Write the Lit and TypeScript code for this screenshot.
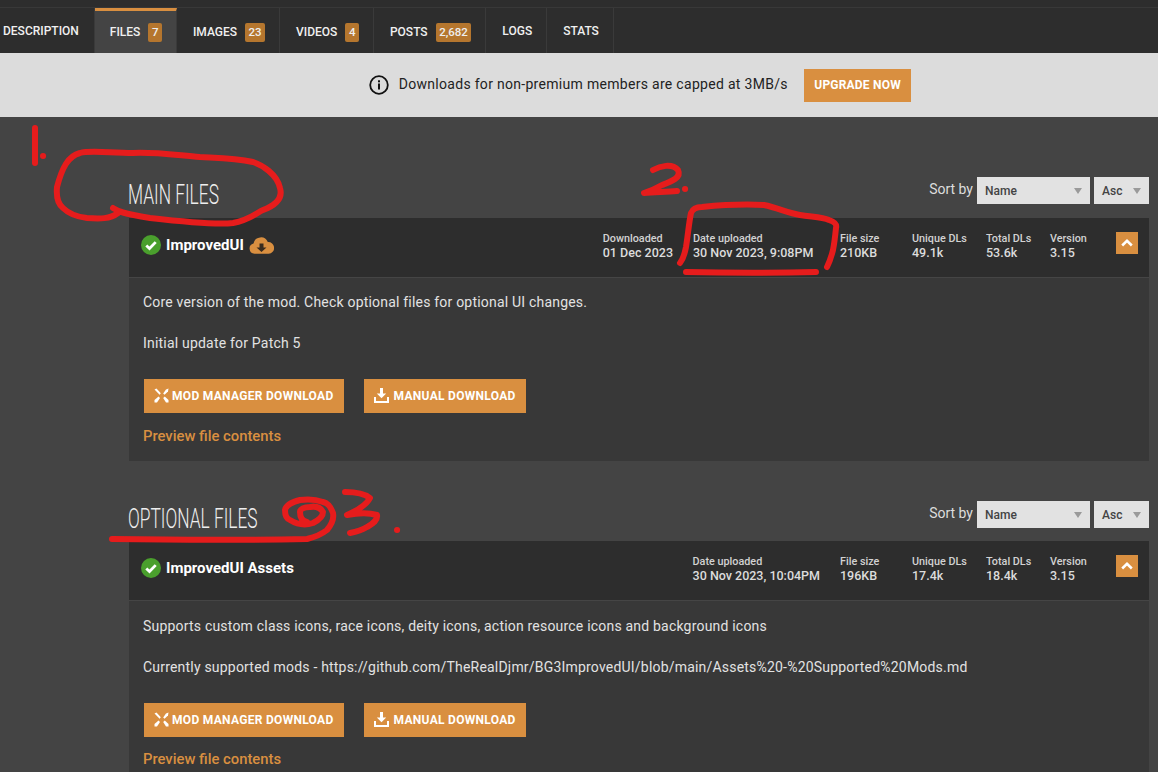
import { LitElement, html, css, svg } from 'lit';
import { customElement } from 'lit/decorators.js';

const tabs = [
  { label: 'Description' },
  { label: 'Files', count: '7', active: true },
  { label: 'Images', count: '23' },
  { label: 'Videos', count: '4' },
  { label: 'Posts', count: '2,682' },
  { label: 'Logs' },
  { label: 'Stats' },
];

const sections = [
  {
    title: 'Main files',
    name: 'ImprovedUI',
    cloud: true,
    downloaded: '01 Dec 2023',
    uploaded: '30 Nov 2023, 9:08PM',
    size: '210KB',
    unique: '49.1k',
    total: '53.6k',
    version: '3.15',
    lines: [
      'Core version of the mod. Check optional files for optional UI changes.',
      'Initial update for Patch 5',
    ],
  },
  {
    title: 'Optional files',
    name: 'ImprovedUI Assets',
    cloud: false,
    downloaded: '',
    uploaded: '30 Nov 2023, 10:04PM',
    size: '196KB',
    unique: '17.4k',
    total: '18.4k',
    version: '3.15',
    lines: [
      'Supports custom class icons, race icons, deity icons, action resource icons and background icons',
      'Currently supported mods - https://github.com/TheRealDjmr/BG3ImprovedUI/blob/main/Assets%20-%20Supported%20Mods.md',
    ],
  },
];

const checkIcon = html`<svg class="check" viewBox="0 0 20 20" width="20" height="20">
  <circle cx="10" cy="10" r="10" fill="#4a9f2d"></circle>
  <path d="M5.3 10.4l3.2 3.1 6.2-6.4" fill="none" stroke="#fff" stroke-width="2.8"></path>
</svg>`;

const cloudIcon = html`<svg class="cloud" viewBox="0 0 25 17" width="25" height="17">
  <path d="M5.500 16.800a5.300 5.300 0 0 1-1-10.400A7.500 7.500 0 0 1 18.800 5a5.900 5.900 0 0 1 .8 11.800z" fill="#d98f40"></path>
  <path d="M10.500 6.500h4v4h3l-5 4.600-5-4.600h3z" fill="#3a2c1e"></path>
</svg>`;

const modIcon = html`<svg viewBox="0 0 15 15" width="15" height="15" fill="#fff">
  <path d="M.5 1.500L2.500.5L6.800 5.300L5.600 6.800z"></path>
  <path d="M14.500.5L14 3.500L10.500 6.800L9.200 5.400L12 1.500z"></path>
  <path d="M.5 12L4.500 8.400L6 9.900L3 14.500H.5z"></path>
  <path d="M9.200 9.900L10.800 8.400L14.500 12V14.500H12z"></path>
</svg>`;

const trayIcon = html`<svg viewBox="0 0 15 15" width="15" height="15" fill="#fff">
  <path d="M6 0h3v5.500h3.200L7.500 10.300 2.800 5.500H6z"></path>
  <path d="M0 9h2v4h11V9h2v6H0z"></path>
</svg>`;

const chevronIcon = html`<svg viewBox="0 0 12 8" width="12" height="8">
  <path d="M1.200 6.500L6 1.900l4.800 4.600" fill="none" stroke="#fff" stroke-width="2.600"></path>
</svg>`;

const infoIcon = html`<svg viewBox="0 0 20 20" width="20" height="20">
  <circle cx="10" cy="10" r="8.800" fill="none" stroke="#111" stroke-width="1.800"></circle>
  <rect x="9" y="8.500" width="2" height="6" fill="#111"></rect>
  <rect x="9" y="5.300" width="2" height="2" fill="#111"></rect>
</svg>`;

// hand drawn marks from the person who took the screenshot
const scribbles = svg`
  <path d="M35 128L35 163"></path>
  <path d="M43 156h.1"></path>
  <path d="M113 208C118 211 120 213 150 218C185 222 215 225 233 223C250 220 258 212 263 210C276 205 283 198 280 188C277 174 262 165 253 162C235 158 220 158 200 157C175 155 155 152 133 153C110 153 90 150 80 153C68 156 62 168 57 187C56 198 58 204 63 208C70 215 78 217 87 218C100 219 110 219 118 213"></path>
  <path d="M653 170C660 166 672 163 678 170C682 178 670 182 662 185C655 189 650 191 644 193C655 192 665 192 677 191"></path>
  <path d="M685 189h.1"></path>
  <path d="M680 263C684 258 685 252 686 247C688 235 689 222 691 213C693 208 697 207 702 207C722 205 745 204 764 205C778 208 788 213 800 215C812 217 822 217 829 220C835 222 837 224 836 228C835 238 834 245 833 250C831 258 829 263 827 267"></path>
  <path d="M686 272C730 273 775 273 816 272"></path>
  <path d="M112 539C180 540 250 540 307 539C315 537 322 534 327 530C332 524 334 518 333 513C330 505 327 503 323 502C315 499 307 499 300 500C292 502 286 505 285 510C285 516 287 519 290 520C298 525 307 525 313 523C319 520 323 516 323 512C320 507 315 506 310 507C304 507 300 509 300 512C300 517 302 521 307 522"></path>
  <path d="M345 492C355 492 365 494 370 498C366 506 356 511 347 515C358 513 370 513 377 515C378 521 372 524 367 527C362 530 355 532 350 533"></path>
  <path d="M397 530h.1"></path>
`;

@customElement('app-root')
export class AppRoot extends LitElement {
  static styles = css`
    :host {
      display: block;
      position: relative;
      width: 1158px;
      height: 772px;
      overflow: hidden;
      background: #444;
      font-family: Roboto, 'Liberation Sans', sans-serif;
    }

    .tabs {
      display: flex;
      height: 53px;
      box-sizing: border-box;
      padding-top: 7px;
      margin-left: -13px;
      background: #2d2d2d;
    }

    .tabs-inner {
      display: flex;
      flex: 1;
      border-top: 1px solid #383838;
    }

    .tab {
      display: flex;
      align-items: center;
      gap: 8px;
      padding: 3px 14px 0 16px;
      border-right: 1px solid #3a3a3a;
      color: #f0f0f0;
      font-size: 12px;
      font-weight: 500;
      text-transform: uppercase;
    }

    .tab:first-child {
      padding-right: 15px;
    }

    .tab.plain {
      padding-top: 0;
    }

    .tab.active {
      background: #444;
      padding: 0 14px 0 15px;
      border-top: 3px solid #d98f40;
    }

    .badge {
      padding: 3px 3.5px;
      border-radius: 2px;
      background: #b5762e;
      color: #eee;
      font-size: 11.500px;
      line-height: 13px;
      font-weight: 500;
    }

    .notice {
      display: flex;
      justify-content: center;
      align-items: center;
      height: 64px;
      padding-left: 122px;
      background: #dcdcdc;
      color: #222;
      font-size: 14px;
      letter-spacing: 0.3px;
    }

    .notice svg {
      margin-right: 10px;
    }

    .notice-text {
      position: relative;
      top: -1px;
    }

    .upgrade {
      margin-left: 16px;
      padding: 0 10.500px;
      line-height: 33px;
      background: #d98f40;
      color: #fff;
      font-size: 12px;
      font-weight: 700;
      letter-spacing: 0.2px;
    }

    main {
      padding: 60px 9px 0 129px;
    }

    .section + .section {
      margin-top: 40px;
    }

    .section-head {
      display: flex;
      align-items: center;
      height: 27px;
      margin-bottom: 14px;
    }

    .section + .section .section-head {
      margin-bottom: 13px;
    }

    h2 {
      flex: 1;
      margin: 0;
      color: #eee;
      font-size: 28px;
      line-height: 32px;
      font-weight: 300;
      text-transform: uppercase;
      transform: scaleX(0.62);
      transform-origin: left center;
      position: relative;
      left: -1px;
      top: 4px;
    }

    .sort-label {
      color: #ddd;
      font-size: 14px;
      margin: 0 4px 3px 0;
    }

    .select {
      display: flex;
      align-items: center;
      justify-content: space-between;
      box-sizing: border-box;
      height: 27px;
      padding: 0 8px;
      background: #e2e2e2;
      color: #444;
      font-size: 12px;
      font-weight: 500;
    }

    .select.name {
      width: 113px;
      margin-right: 4px;
    }

    .select.order {
      width: 55px;
    }

    .select::after {
      content: '';
      border-left: 4.500px solid transparent;
      border-right: 4.500px solid transparent;
      border-top: 6px solid #9a9a9a;
    }

    .card {
      background: #383838;
    }

    .card-head {
      display: flex;
      align-items: center;
      box-sizing: border-box;
      height: 60px;
      padding: 0 11px 5px 12px;
      background: #2d2d2d;
      border-bottom: 1px solid #454545;
    }

    .name-row {
      display: flex;
      align-items: center;
      flex: 1;
      color: #fff;
      font-size: 15px;
      font-weight: 700;
    }

    .check {
      margin-right: 5px;
    }

    .cloud {
      margin-left: 5px;
    }

    .stat {
      margin-top: 2px;
      color: #d2d2d2;
      font-size: 10.800px;
      font-weight: 500;
      line-height: 13px;
    }

    .stat b {
      display: block;
      margin-top: 1px;
      font-size: 12.500px;
      line-height: 14px;
      font-weight: 500;
      color: #dcdcdc;
    }

    .stat.downloaded {
      margin-right: 20px;
    }

    .stat.uploaded {
      min-width: 127px;
      margin-right: 20px;
    }

    .stat.size {
      width: 72px;
    }

    .stat.unique {
      width: 74px;
    }

    .stat.total {
      width: 64px;
    }

    .stat.version {
      width: 66px;
    }

    .toggle {
      display: flex;
      align-items: center;
      justify-content: center;
      width: 22px;
      height: 22px;
      margin-bottom: 4px;
      background: #d98f40;
    }

    .card-body {
      padding: 16px 14px 16px 14px;
      color: #e2e2e2;
      font-size: 14px;
    }

    .section + .section .card-body {
      padding-top: 17px;
    }

    .card-body p {
      margin: 0 0 25px;
      line-height: 16px;
      letter-spacing: 0.2px;
    }

    .actions {
      display: flex;
      gap: 20px;
      margin-top: 28px;
      margin-left: 1px;
    }

    .button {
      display: flex;
      align-items: center;
      gap: 3px;
      box-sizing: border-box;
      height: 34px;
      padding: 0 10px 1px;
      background: #d98f40;
      color: #fff;
      font-size: 12px;
      font-weight: 700;
      letter-spacing: 0.3px;
    }

    .button.manual {
      gap: 5px;
    }

    .preview {
      margin-top: 15px;
      color: #d98f40;
      font-size: 14.800px;
      line-height: 17px;
      font-weight: 500;
    }

    .section + .section .preview {
      margin-top: 14px;
    }

    .scribbles {
      position: absolute;
      left: 0;
      top: 0;
      pointer-events: none;
    }

    .scribbles path {
      fill: none;
      stroke: #e61c1c;
      stroke-width: 6;
      stroke-linecap: round;
      stroke-linejoin: round;
    }
  `;

  renderTab(tab: { label: string; count?: string; active?: boolean }) {
    const classes = `tab ${tab.active ? 'active' : ''} ${tab.count ? '' : 'plain'}`;
    return html`<div class=${classes}>
      ${tab.label}${tab.count ? html`<span class="badge">${tab.count}</span>` : ''}
    </div>`;
  }

  renderSection(section: (typeof sections)[number]) {
    return html`
      <section class="section">
        <div class="section-head">
          <h2>${section.title}</h2>
          <span class="sort-label">Sort by</span>
          <div class="select name">Name</div>
          <div class="select order">Asc</div>
        </div>
        <div class="card">
          <div class="card-head">
            <div class="name-row">
              ${checkIcon}${section.name}${section.cloud ? cloudIcon : ''}
            </div>
            ${section.downloaded
              ? html`<div class="stat downloaded">Downloaded<b>${section.downloaded}</b></div>`
              : ''}
            <div class="stat uploaded">Date uploaded<b>${section.uploaded}</b></div>
            <div class="stat size">File size<b>${section.size}</b></div>
            <div class="stat unique">Unique DLs<b>${section.unique}</b></div>
            <div class="stat total">Total DLs<b>${section.total}</b></div>
            <div class="stat version">Version<b>${section.version}</b></div>
            <div class="toggle">${chevronIcon}</div>
          </div>
          <div class="card-body">
            ${section.lines.map((line) => html`<p>${line}</p>`)}
            <div class="actions">
              <div class="button">${modIcon} MOD MANAGER DOWNLOAD</div>
              <div class="button manual">${trayIcon} MANUAL DOWNLOAD</div>
            </div>
            <div class="preview">Preview file contents</div>
          </div>
        </div>
      </section>
    `;
  }

  render() {
    return html`
      <nav class="tabs">
        <div class="tabs-inner">${tabs.map((tab) => this.renderTab(tab))}</div>
      </nav>
      <div class="notice">
        ${infoIcon}
        <span class="notice-text">Downloads for non-premium members are capped at 3MB/s</span>
        <span class="upgrade">UPGRADE NOW</span>
      </div>
      <main>${sections.map((section) => this.renderSection(section))}</main>
      <svg class="scribbles" width="1158" height="772" viewBox="0 0 1158 772">${scribbles}</svg>
    `;
  }
}
